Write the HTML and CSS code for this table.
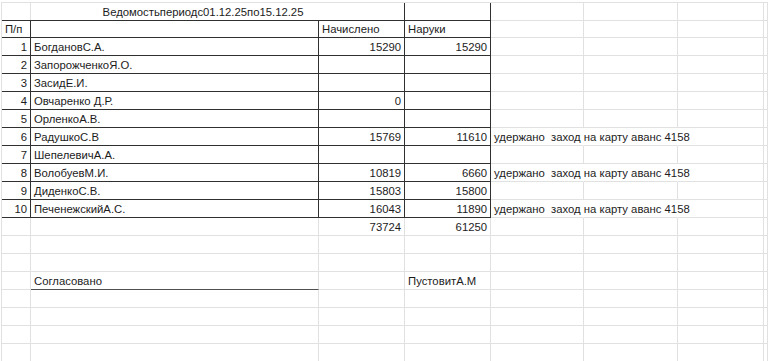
FILE: index.html
```html
<!DOCTYPE html>
<html lang="ru">
<head>
<meta charset="utf-8">
<title>Ведомость</title>
<link rel="stylesheet" href="styles.css">
</head>
<body>
<table class="sheet">
  <colgroup>
    <col class="col-a"><col class="col-b"><col class="col-c"><col class="col-d">
    <col class="col-e"><col class="col-f"><col class="col-g"><col class="col-h">
  </colgroup>
  <tr class="row-title">
    <td class="title k" colspan="3">Ведомостьпериодс01.12.25по15.12.25</td>
    <td class="k"></td><td></td><td></td><td></td><td></td>
  </tr>
  <tr class="row-head">
    <td class="k">П/п</td><td class="k"></td><td class="k">Начислено</td><td class="k">Наруки</td>
    <td></td><td></td><td></td><td></td>
  </tr>
  <tr><td class="k num">1</td><td class="k">БогдановС.А.</td><td class="k num">15290</td><td class="k num">15290</td><td></td><td></td><td></td><td></td></tr>
  <tr><td class="k num">2</td><td class="k">ЗапорожченкоЯ.О.</td><td class="k"></td><td class="k"></td><td></td><td></td><td></td><td></td></tr>
  <tr><td class="k num">3</td><td class="k">ЗасидЕ.И.</td><td class="k"></td><td class="k"></td><td></td><td></td><td></td><td></td></tr>
  <tr><td class="k num">4</td><td class="k">Овчаренко Д.Р.</td><td class="k num">0</td><td class="k"></td><td></td><td></td><td></td><td></td></tr>
  <tr><td class="k num">5</td><td class="k">ОрленкоА.В.</td><td class="k"></td><td class="k"></td><td></td><td></td><td></td><td></td></tr>
  <tr><td class="k num">6</td><td class="k">РадушкоС.В</td><td class="k num">15769</td><td class="k num">11610</td><td class="ovf">удержано  заход на карту аванс 4158</td><td class="ovf"></td><td></td><td></td></tr>
  <tr><td class="k num">7</td><td class="k">ШепелевичА.А.</td><td class="k"></td><td class="k"></td><td></td><td></td><td></td><td></td></tr>
  <tr><td class="k num">8</td><td class="k">ВолобуевМ.И.</td><td class="k num">10819</td><td class="k num">6660</td><td class="ovf">удержано  заход на карту аванс 4158</td><td class="ovf"></td><td></td><td></td></tr>
  <tr><td class="k num">9</td><td class="k">ДиденкоС.В.</td><td class="k num">15803</td><td class="k num">15800</td><td></td><td></td><td></td><td></td></tr>
  <tr><td class="k num">10</td><td class="k">ПеченежскийА.С.</td><td class="k num">16043</td><td class="k num">11890</td><td class="ovf">удержано  заход на карту аванс 4158</td><td class="ovf"></td><td></td><td></td></tr>
  <tr><td></td><td></td><td class="num">73724</td><td class="num">61250</td><td></td><td></td><td></td><td></td></tr>
  <tr><td></td><td></td><td></td><td></td><td></td><td></td><td></td><td></td></tr>
  <tr><td></td><td></td><td></td><td></td><td></td><td></td><td></td><td></td></tr>
  <tr><td></td><td class="sign">Согласовано</td><td></td><td>ПустовитА.М</td><td></td><td></td><td></td><td></td></tr>
  <tr><td></td><td></td><td></td><td></td><td></td><td></td><td></td><td></td></tr>
  <tr><td></td><td></td><td></td><td></td><td></td><td></td><td></td><td></td></tr>
  <tr><td></td><td></td><td></td><td></td><td></td><td></td><td></td><td></td></tr>
  <tr><td></td><td></td><td></td><td></td><td></td><td></td><td></td><td></td></tr>
</table>
</body>
</html>
```

FILE: styles.css
```css
html, body {
  margin: 0;
  padding: 0;
  background: #ffffff;
  overflow: hidden;
}

.sheet {
  margin: 2px 0 0 1px;
  width: 767px;
  table-layout: fixed;
  border-collapse: separate;
  border-spacing: 0;
  border-left: 1px solid #e1e1e1;
  border-top: 1px solid #e1e1e1;
  font-family: "Liberation Sans", Arial, sans-serif;
  font-size: 11.3px;
  color: #1c1c1c;
}

.col-a { width: 29px; }
.col-b { width: 288px; }
.col-c { width: 86px; }
.col-d { width: 86px; }
.col-e { width: 93px; }
.col-f { width: 94px; }
.col-g { width: 86px; }
.col-h { width: 4px; }

.sheet tr { height: 18px; }
.sheet tr.row-title { height: 18px; }
.sheet tr.row-head { height: 17px; }

.sheet td {
  border-right: 1px solid #e1e1e1;
  border-bottom: 1px solid #e1e1e1;
  padding: 0 3px 1px 3px;
  vertical-align: bottom;
  line-height: 13px;
  white-space: pre;
  overflow: visible;
}

.sheet td.k {
  border-right-color: #303030;
  border-bottom-color: #303030;
}

.sheet td.num { text-align: right; }

.sheet td.title {
  text-align: center;
  background: linear-gradient(to right, transparent 28px, #e1e1e1 28px, #e1e1e1 29px, transparent 29px);
}

.sheet td.ovf { border-right-color: transparent; }

.sheet td.sign { border-bottom-color: #505050; }
```
